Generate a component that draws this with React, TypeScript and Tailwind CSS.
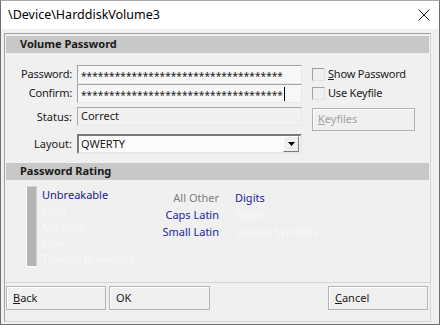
import React from "react"

const font = { fontFamily: '"Noto Sans", "Open Sans", sans-serif' }

function Check({ children }: { children: React.ReactNode }) {
  return (
    <label className="flex items-center h-[19px] gap-[3px]">
      <span className="w-[13px] h-[13px] border border-t-[#a0a0a0] border-l-[#a0a0a0] border-r-[#e3e3e3] border-b-[#e3e3e3] bg-[#f0f0f0]" />
      <span className="text-[11px] tracking-[-0.2px] text-[#1a1a1a]">{children}</span>
    </label>
  )
}

function Btn({ children, className = "" }: { children: React.ReactNode; className?: string }) {
  return (
    <button
      className={`h-[24px] border border-[#b4b4b4] shadow-[inset_1px_1px_0_#ffffff] bg-[#f0f0f0] text-left pl-[6px] text-[11px] text-[#1a1a1a] ${className}`}
    >
      {children}
    </button>
  )
}

const stars = "************************************"

export default function App() {
  return (
    <div
      style={font}
      className="w-[440px] h-[325px] flex flex-col bg-[#f0f0f0] border border-[#6e6e6e] border-t-[#a8a8a8] overflow-hidden"
    >
      {/* title bar */}
      <div className="h-[28px] bg-white flex items-center justify-between pl-[7px] pr-[8px] shrink-0">
        <span className="text-[12.5px] text-black">\Device\HarddiskVolume3</span>
        <svg width="12" height="12" viewBox="0 0 12 12" className="mr-[1px]">
          <path d="M0.5 0.5 L11.5 11.5 M11.5 0.5 L0.5 11.5" stroke="#222" strokeWidth="1" />
        </svg>
      </div>

      <div className="flex-1 pl-[3px] pr-[8px] pt-[4px] pb-[2px]">
        <div className="h-full flex flex-col border border-[#a0a0a0] border-r-[#d4d4d4] border-b-[#d4d4d4]">
          {/* volume password header */}
          <div className="mx-[1px] mt-[2px] h-[17px] bg-[#c8c8c8] flex items-center pl-[14px] pr-[1px]">
            <span className="text-[11px] font-bold text-[#1a1a1a]">Volume Password</span>
          </div>

          <div className="flex flex-col mt-[12px] text-[11px] text-[#1a1a1a]">
            <div className="flex items-center h-[19px]">
              <span className="w-[68px] text-right pr-[1px] tracking-[-0.2px]">Password:</span>
              <div className="ml-[4px] w-[225px] h-[19px] bg-[#f7f7f7] border border-t-[#a3a3a3] border-l-[#a3a3a3] border-r-[#e8e8e8] border-b-[#e8e8e8] flex items-center pl-[3px] overflow-hidden">
                <span className="text-[10px] tracking-[0.1px] leading-none pt-[3px]">{stars}</span>
              </div>
              <div className="ml-[10px]">
                <Check>
                  <u>S</u>how Password
                </Check>
              </div>
            </div>
            <div className="flex items-center h-[19px]">
              <span className="w-[68px] text-right pr-[1px] tracking-[-0.2px]">Confirm:</span>
              <div className="ml-[4px] w-[225px] h-[19px] bg-[#f7f7f7] border border-t-[#a3a3a3] border-l-[#a3a3a3] border-r-[#e8e8e8] border-b-[#e8e8e8] flex items-center pl-[3px] overflow-hidden">
                <span className="text-[10px] tracking-[0.1px] leading-none pt-[3px]">{stars}</span>
                <span className="w-[1px] h-[14px] bg-black ml-[1px]" />
              </div>
              <div className="ml-[10px]">
                <Check>Use Keyfile</Check>
              </div>
            </div>
            <div className="flex items-start h-[19px] mt-[4px]">
              <span className="w-[68px] text-right pr-[1px] leading-[19px]">Status:</span>
              <div className="ml-[4px] w-[225px] h-[19px] bg-[#f0f0f0] border border-t-[#a8a8a8] border-l-[#a8a8a8] border-r-[#e8e8e8] border-b-[#e8e8e8] flex items-center pl-[3px]">
                Correct
              </div>
              <button className="ml-[10px] mt-[1px] w-[103px] h-[23px] shrink-0 border border-[#b0b0b0] shadow-[inset_1px_1px_0_#ffffff] bg-[#f0f0f0] text-left pl-[5px] text-[#a0a0a0]">
                <u>K</u>eyfiles
              </button>
            </div>
            <div className="flex items-center h-[20px] mt-[8px]">
              <span className="w-[68px] text-right pr-[1px]">Layout:</span>
              <div className="ml-[4px] w-[225px] h-[20px] bg-[#fbfbfb] border-2 border-t-[#7a7a7a] border-l-[#7a7a7a] border-r-[#e8e8e8] border-b-[#e8e8e8] flex items-center pl-[2px] pr-[1px]">
                <span className="flex-1">QWERTY</span>
                <span className="w-[16px] h-[16px] bg-[#f0f0f0] border border-t-white border-l-white border-r-[#7a7a7a] border-b-[#7a7a7a] flex items-center justify-center">
                  <svg width="7" height="4" viewBox="0 0 7 4">
                    <path d="M0 0 H7 L3.5 4 Z" fill="#000" />
                  </svg>
                </span>
              </div>
            </div>
          </div>

          {/* password rating header */}
          <div className="mx-[1px] mt-[9px] h-[17px] bg-[#c8c8c8] flex items-center pl-[14px]">
            <span className="text-[11px] font-bold text-[#1a1a1a]">Password Rating</span>
          </div>

          <div className="flex mt-[6px] text-[11px]">
            <div className="ml-[21px] w-[11px] h-[81px] border border-t-[#d0d0d0] border-l-white border-r-[#d0d0d0] border-b-white bg-[#b4b4b4]" />
            <div className="ml-[5px] w-[110px] flex flex-col leading-[16px] mt-[1px]">
              <span className="text-[#20208a]">Unbreakable</span>
              <span className="text-[#f8f8f8]">High</span>
              <span className="text-[#f8f8f8]">Medium</span>
              <span className="text-[#f8f8f8]">Low</span>
              <span className="text-[#f8f8f8]">Trivially Breakable</span>
            </div>
            <div className="w-[67px] flex flex-col text-right leading-[17px] mt-[3px]">
              <span className="text-[#7d7d7d]">All Other</span>
              <span className="text-[#2222a0]">Caps Latin</span>
              <span className="text-[#2222a0]">Small Latin</span>
            </div>
            <div className="ml-[16px] flex flex-col leading-[17px] mt-[3px]">
              <span className="text-[#2222a0]">Digits</span>
              <span className="text-[#f8f8f8]">Space</span>
              <span className="text-[#f8f8f8]">Special Symbols</span>
            </div>
          </div>

          {/* buttons */}
          <div className="mt-auto border-t border-[#d6d6d6] pt-[3px] pb-[11px] pl-[1px] pr-[2px] flex gap-[3px]">
            <Btn className="w-[100px]">
              <u>B</u>ack
            </Btn>
            <Btn className="w-[101px]">OK</Btn>
            <Btn className="w-[100px] ml-auto">
              <u>C</u>ancel
            </Btn>
          </div>
        </div>
      </div>
    </div>
  )
}
